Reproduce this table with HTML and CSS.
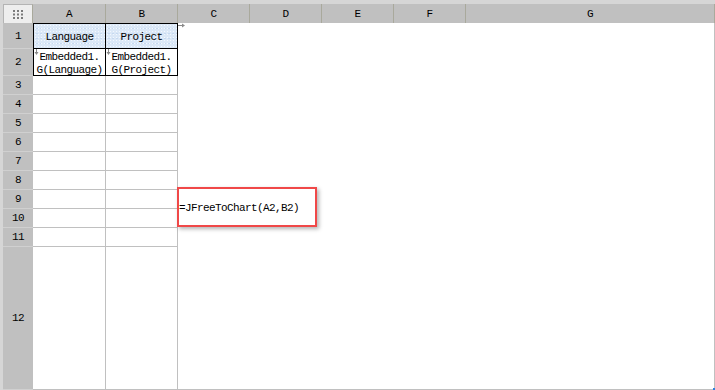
FILE: index.html
```html
<!DOCTYPE html>
<html>
<head>
<meta charset="utf-8">
<link rel="stylesheet" href="styles.css">
</head>
<body>
<div class="frame">
  <div class="sheet">
    <div class="corner">
      <svg width="10" height="9" viewBox="0 0 10 9" class="dots">
        <rect x="0" y="0" width="2" height="2"/><rect x="4" y="0" width="2" height="2"/><rect x="8" y="0" width="2" height="2"/>
        <rect x="0" y="3.5" width="2" height="2"/><rect x="4" y="3.5" width="2" height="2"/><rect x="8" y="3.5" width="2" height="2"/>
        <rect x="0" y="7" width="2" height="2"/><rect x="4" y="7" width="2" height="2"/><rect x="8" y="7" width="2" height="2"/>
      </svg>
    </div>
    <div class="ch">A</div>
    <div class="ch">B</div>
    <div class="ch">C</div>
    <div class="ch">D</div>
    <div class="ch">E</div>
    <div class="ch">F</div>
    <div class="ch">G</div>

    <div class="blank">
      <svg class="mark-right" width="8" height="5" viewBox="0 0 8 5"><path d="M0 2.5H5" stroke="#8a8a8a" stroke-width="1"/><path d="M4 0.5L7 2.5L4 4.5Z" fill="#8a8a8a"/></svg>
      <span class="corner-dot"></span>
    </div>

    <div class="rh">1</div>
    <div class="cell boxl boxt boxr boxb blue center">Language</div>
    <div class="cell boxt boxr boxb blue center">Project</div>

    <div class="rh">2</div>
    <div class="cell boxl boxr boxb wrap">
      <svg class="mark-down" width="5" height="6" viewBox="0 0 5 6"><path d="M2.5 0V4" stroke="#8a8a8a" stroke-width="1"/><path d="M0.5 3L2.5 6L4.5 3Z" fill="#8a8a8a"/></svg>
      Embedded1.<wbr>G(Language)
    </div>
    <div class="cell boxr boxb wrap">
      <svg class="mark-down" width="5" height="6" viewBox="0 0 5 6"><path d="M2.5 0V4" stroke="#8a8a8a" stroke-width="1"/><path d="M0.5 3L2.5 6L4.5 3Z" fill="#8a8a8a"/></svg>
      Embedded1.<wbr>G(Project)
    </div>

    <div class="rh">3</div><div class="cell"></div><div class="cell"></div>
    <div class="rh">4</div><div class="cell"></div><div class="cell"></div>
    <div class="rh">5</div><div class="cell"></div><div class="cell"></div>
    <div class="rh">6</div><div class="cell"></div><div class="cell"></div>
    <div class="rh">7</div><div class="cell"></div><div class="cell"></div>
    <div class="rh">8</div><div class="cell"></div><div class="cell"></div>
    <div class="rh">9</div><div class="cell"></div><div class="cell"></div>
    <div class="rh">10</div><div class="cell"></div><div class="cell"></div>
    <div class="rh">11</div><div class="cell"></div><div class="cell"></div>
    <div class="rh">12</div><div class="cell"></div><div class="cell"></div>

    <div class="formula">
      <div class="highlight">=JFreeToChart(A2,B2)</div>
    </div>
  </div>
</div>
</body>
</html>
```

FILE: styles.css
```css
* {
  box-sizing: border-box;
}

body {
  margin: 0;
  background: #ffffff;
  font-family: "Liberation Mono", "Courier New", monospace;
  font-size: 11px;
  letter-spacing: -0.6px;
  color: #000;
}

.frame {
  width: 715px;
  height: 390px;
  background: #d6d6d6;
  padding: 4px 0 0 3px;
  overflow: hidden;
}

.sheet {
  display: grid;
  grid-template-columns: 30px 73px 72px 72px 72px 72px 72px 249px;
  grid-template-rows: 19px 26px 27px repeat(9, 19px) 143px;
}

.corner {
  background: #eeeeee;
  border-top: 1px solid #b4b4b4;
  border-left: 1px solid #b4b4b4;
  border-right: 1px solid #a9a99c;
  display: flex;
  align-items: center;
  justify-content: center;
}

.dots rect {
  fill: #7a7a7a;
}

.ch {
  background: #c0c0c0;
  border-right: 1px solid #a9a99c;
  display: flex;
  align-items: center;
  justify-content: center;
  padding-top: 1px;
}

.rh {
  background: #c0c0c0;
  border-bottom: 1px solid #d0d0d0;
  display: flex;
  align-items: center;
  justify-content: center;
}

.cell {
  position: relative;
  background: #ffffff;
  border-right: 1px solid #c0c0c0;
  border-bottom: 1px solid #c0c0c0;
  overflow: hidden;
}

.boxl {
  border-left: 1px solid #000;
}

.boxt {
  border-top: 1px solid #000;
}

.boxr {
  border-right-color: #000;
}

.boxb {
  border-bottom-color: #000;
}

.blue {
  background-color: #dbe8f7;
  background-image:
    radial-gradient(circle, #f3f8fe 0.7px, transparent 0.9px),
    radial-gradient(circle, #c6d9f0 0.6px, transparent 0.8px);
  background-size: 3px 3px, 4px 5px;
  background-position: 0 0, 1px 2px;
}

.center {
  display: flex;
  align-items: center;
  justify-content: center;
  padding-top: 2px;
}

.wrap {
  text-align: center;
  line-height: 13px;
  padding-top: 2px;
}

.mark-down {
  position: absolute;
  left: 0;
  top: 0;
}

.blank {
  position: relative;
  grid-column: 4 / 9;
  grid-row: 2 / 14;
  background: #ffffff;
  border-right: 1px solid #c0c0c0;
  border-bottom: 1px solid #c0c0c0;
}

.mark-right {
  position: absolute;
  left: 0;
  top: 0;
}

.corner-dot {
  position: absolute;
  right: -1px;
  bottom: -1px;
  width: 2px;
  height: 2px;
  background: #2f7fe0;
}

.formula {
  position: relative;
  z-index: 1;
  grid-column: 4 / 6;
  grid-row: 10 / 12;
  display: flex;
  align-items: flex-start;
}

.highlight {
  margin: -3px 0 0 -1px;
  width: 140px;
  height: 40px;
  flex: none;
  border: 2px solid #f04848;
  box-shadow: 2px 2px 4px rgba(0, 0, 0, 0.3);
  display: flex;
  align-items: center;
  white-space: nowrap;
  padding: 1px 0 0 0;
}
```
